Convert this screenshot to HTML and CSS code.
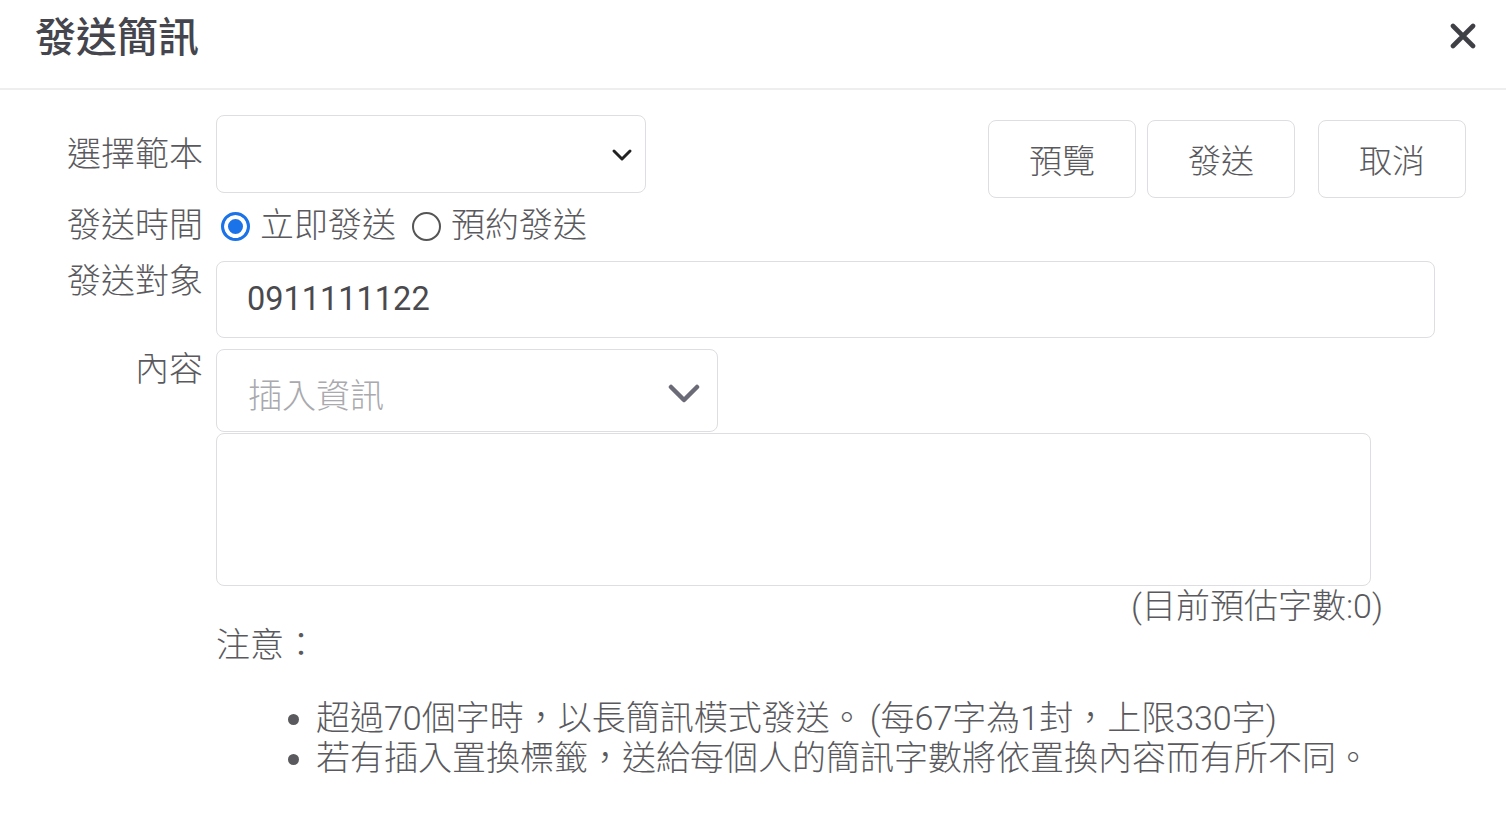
FILE: index.html
```html
<!DOCTYPE html>
<html lang="zh-Hant">
<head>
<meta charset="utf-8">
<title>發送簡訊</title>
<link rel="stylesheet" href="styles.css">
</head>
<body>
<div class="dialog">
  <div class="header">
    <h1 class="title">發送簡訊</h1>
    <button class="close" aria-label="close">
      <svg width="26" height="26" viewBox="0 0 26 26"><path d="M3 3 L23 23 M23 3 L3 23" stroke="#3f3f46" stroke-width="4.6" stroke-linecap="round"/></svg>
    </button>
  </div>
  <div class="body">
    <div class="row row-template">
      <div class="label label-center">選擇範本</div>
      <div class="ctrl ctrl-split">
        <div class="select select-template">
          <span></span>
          <svg class="chev-small" width="22" height="14" viewBox="0 0 22 14"><path d="M3 3 L11 11 L19 3" fill="none" stroke="#222" stroke-width="3" stroke-linecap="round" stroke-linejoin="round"/></svg>
        </div>
        <div class="buttons">
          <button class="btn">預覽</button>
          <button class="btn btn-send">發送</button>
          <button class="btn btn-cancel">取消</button>
        </div>
      </div>
    </div>
    <div class="row row-time">
      <div class="label">發送時間</div>
      <div class="ctrl radios">
        <label class="radio"><span class="dot checked"></span>立即發送</label>
        <label class="radio"><span class="dot"></span>預約發送</label>
      </div>
    </div>
    <div class="row row-target">
      <div class="label">發送對象</div>
      <div class="ctrl">
        <div class="input">0911111122</div>
      </div>
    </div>
    <div class="row row-content">
      <div class="label">內容</div>
      <div class="ctrl">
        <div class="select select-insert">
          <span class="placeholder">插入資訊</span>
          <svg width="32" height="20" viewBox="0 0 32 20"><path d="M3 3 L16 16 L29 3" fill="none" stroke="#6b6b78" stroke-width="4.5" stroke-linecap="round" stroke-linejoin="round"/></svg>
        </div>
        <div class="textarea"></div>
        <div class="count">(目前預估字數:0)</div>
        <div class="note">注意：</div>
        <ul class="notes">
          <li>超過70個字時，以長簡訊模式發送。<span class="paren">(每67字為1封，上限330字)</span></li>
          <li>若有插入置換標籤，送給每個人的簡訊字數將依置換內容而有所不同。</li>
        </ul>
      </div>
    </div>
  </div>
</div>
</body>
</html>
```
FILE: styles.css
```css
* { box-sizing: border-box; }
html, body { margin: 0; padding: 0; background: #fff; }
body {
  font-family: Roboto, "Noto Sans CJK TC", sans-serif;
  font-weight: 300;
  color: #5a5a5e;
  font-size: 34px;
  width: 1506px;
  height: 821px;
  overflow: hidden;
}
.header {
  height: 90px;
  border-bottom: 2px solid #eeeeee;
  display: flex;
  justify-content: space-between;
  align-items: flex-start;
  padding: 12px 30px 0 35px;
}
.title {
  margin: 0;
  font-size: 41px;
  line-height: 52px;
  font-weight: 500;
  color: #45454d;
}
.close {
  border: 0;
  background: none;
  padding: 0;
  margin-top: 11px;
  width: 26px;
  height: 26px;
  cursor: pointer;
}
.close svg { display: block; }
.body {
  padding: 25px 40px 0 0;
}
.row {
  display: flex;
  align-items: flex-start;
}
.label {
  width: 216px;
  padding-right: 13px;
  text-align: right;
  line-height: 40px;
  flex-shrink: 0;
  white-space: nowrap;
}
.label-center { align-self: center; margin-top: -5px; }
.ctrl { flex: 1; }
.ctrl-split {
  display: flex;
  justify-content: space-between;
  align-items: flex-start;
}
.select {
  border: 1.5px solid #dedee2;
  border-radius: 8px;
  display: flex;
  align-items: center;
  justify-content: space-between;
  background: #fff;
}
.select-template {
  width: 430px;
  height: 78px;
  padding: 0 12px 0 20px;
}
.select-template svg { margin-top: 2px; }
.buttons {
  display: flex;
  margin-top: 5px;
}
.btn {
  width: 148px;
  height: 78px;
  border: 1.5px solid #dedee2;
  border-radius: 8px;
  background: #fff;
  font-family: inherit;
  font-weight: 300;
  font-size: 33px;
  color: #5a5a5e;
  padding: 0;
}
.btn-send { margin-left: 11px; }
.btn-cancel { margin-left: 23px; }

.row-time { margin-top: 7px; }
.radios {
  display: flex;
  align-items: center;
  height: 40px;
}
.radio {
  display: flex;
  align-items: center;
  line-height: 40px;
}
.radio + .radio { margin-left: 16px; }
.dot {
  width: 29px;
  height: 29px;
  border-radius: 50%;
  border: 2px solid #555;
  margin: 2px 10px 0 5px;
  flex-shrink: 0;
}
.radio + .radio .dot { margin-left: 0; }
.dot.checked {
  border: 3px solid #1a73e8;
  background: #1a73e8;
  box-shadow: inset 0 0 0 4px #fff;
}

.row-target { margin-top: 16px; }
.input {
  width: 1219px;
  height: 77px;
  border: 1.5px solid #dedee2;
  border-radius: 8px;
  padding-left: 30px;
  font-size: 32.5px;
  font-weight: 400;
  line-height: 74px;
  color: #4a4a4e;
  font-family: Roboto, sans-serif;
}
.row-content { margin-top: 11px; }
.select-insert {
  width: 502px;
  height: 83px;
  padding: 6px 17px 0 31px;
}
.placeholder { color: #a9a9ae; }
.textarea {
  width: 1155px;
  height: 153px;
  border: 1.5px solid #dedee2;
  border-radius: 8px;
  margin-top: 1px;
}
.count {
  width: 1167px;
  text-align: right;
  line-height: 40px;
}
.note {
  line-height: 40px;
  margin-top: -1px;
}
.notes {
  margin: 33px 0 0;
  padding-left: 100px;
  line-height: 40px;
  white-space: nowrap;
}
.paren { margin-left: 6px; }
```
